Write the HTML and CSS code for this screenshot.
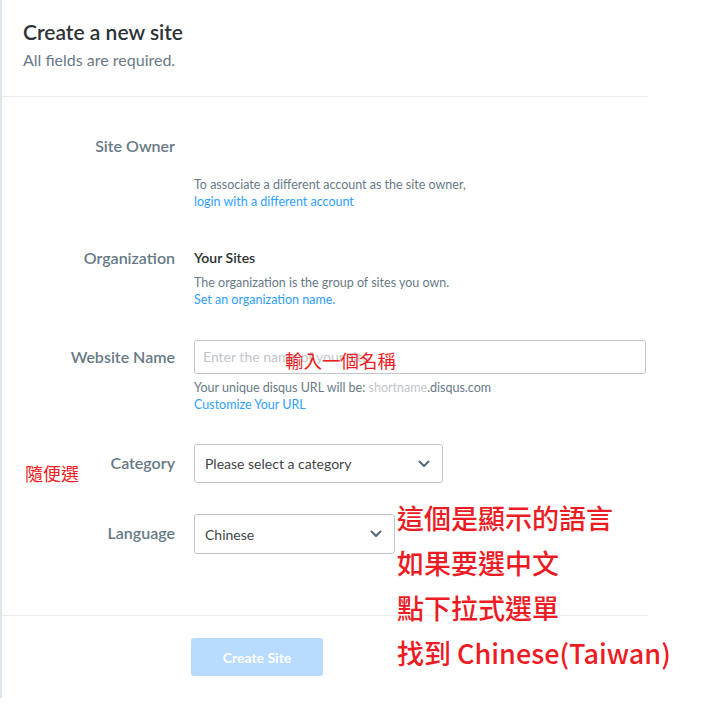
FILE: index.html
```html
<!DOCTYPE html>
<html>
<head>
<meta charset="utf-8">
<link rel="stylesheet" href="styles.css">
</head>
<body>
<div class="panel">
  <header class="head">
    <h1 class="title">Create a new site</h1>
    <p class="sub">All fields are required.</p>
  </header>
  <div class="form">
    <div class="row row-owner">
      <div class="label">Site Owner</div>
      <div class="field">
        <div class="owner-space"></div>
        <p class="help">To associate a different account as the site owner,<br><a class="link">login with a different account</a></p>
      </div>
    </div>
    <div class="row row-org">
      <div class="label">Organization</div>
      <div class="field">
        <div class="org-name">Your Sites</div>
        <p class="help help-org">The organization is the group of sites you own.<br><a class="link">Set an organization name.</a></p>
      </div>
    </div>
    <div class="row row-name">
      <div class="label label-input">Website Name</div>
      <div class="field">
        <div class="input">Enter the name of your site</div>
        <p class="help help-url">Your unique disqus URL will be: <span class="muted">shortname</span>.disqus.com<br><a class="link">Customize Your URL</a></p>
      </div>
    </div>
    <div class="row row-cat">
      <div class="label label-select">Category</div>
      <div class="field">
        <div class="select select-cat"><span>Please select a category</span>
          <svg class="chev" width="12" height="8" viewBox="0 0 12 8"><path d="M1.5 1.5 6 6l4.5-4.5" fill="none" stroke="#5d6b76" stroke-width="2" stroke-linecap="round" stroke-linejoin="round"/></svg>
        </div>
      </div>
    </div>
    <div class="row row-lang">
      <div class="label label-select2">Language</div>
      <div class="field">
        <div class="select select-lang"><span>Chinese</span>
          <svg class="chev" width="12" height="8" viewBox="0 0 12 8"><path d="M1.5 1.5 6 6l4.5-4.5" fill="none" stroke="#5d6b76" stroke-width="2" stroke-linecap="round" stroke-linejoin="round"/></svg>
        </div>
      </div>
    </div>
  </div>
  <div class="foot">
    <button class="btn">Create Site</button>
  </div>
</div>
<div class="note note-name">輸入一個名稱</div>
<div class="note note-cat">隨便選</div>
<div class="note note-lang">這個是顯示的語言<br>如果要選中文<br>點下拉式選單<br>找到 Chinese(Taiwan)</div>
</body>
</html>
```
FILE: styles.css
```css
* { box-sizing: border-box; }
html, body { margin: 0; padding: 0; background: #fff; }
body {
  font-family: "Lato", "Open Sans", sans-serif;
  position: relative;
  width: 726px;
  height: 714px;
  overflow: hidden;
}
.panel {
  width: 648px;
  height: 698px;
  border-left: 2px solid #e1e5ee;
}
.head {
  padding: 19px 0 0 21px;
  height: 97px;
  border-bottom: 1px solid #e9ebee;
}
.title {
  margin: 0;
  font-size: 21px;
  line-height: 26px;
  font-weight: 600;
  color: #2e3336;
}
.sub {
  margin: 5px 0 0;
  font-size: 16px;
  line-height: 20px;
  color: #687a86;
}
.form { padding-top: 39px; }
.row {
  display: grid;
  grid-template-columns: 173px 1fr;
  column-gap: 19px;
}
.label {
  text-align: right;
  font-size: 16px;
  line-height: 20px;
  font-weight: 600;
  color: #687a86;
}
.field { width: 452px; }
.owner-space { height: 40px; }
.help {
  margin: 0;
  font-size: 12.5px;
  line-height: 17px;
  color: #687a86;
}
.link { color: #2e9fff; }
.muted { color: #c2c6cc; }
.row-org { margin-top: 38px; }
.org-name {
  font-size: 14px;
  line-height: 20px;
  font-weight: 600;
  color: #2a2e2e;
}
.help-org { margin-top: 6px; }
.row-name { margin-top: 32px; }
.label-input { padding-top: 7px; }
.input {
  height: 34px;
  border: 1px solid #c2c6cc;
  border-radius: 3px;
  padding: 0 8px;
  font-size: 14px;
  line-height: 32px;
  color: #c2c6cc;
}
.help-url { margin-top: 5px; }
.row-cat { margin-top: 31px; }
.label-select { padding-top: 9px; }
.label-select2 { padding-top: 9px; }
.select {
  height: 39px;
  border: 1px solid #c2c6cc;
  border-radius: 3px;
  padding: 0 12px 0 10px;
  display: flex;
  align-items: center;
  justify-content: space-between;
  font-size: 14px;
  color: #3f4549;
}
.select-cat { width: 249px; }
.row-lang { margin-top: 31px; }
.select-lang { width: 201px; height: 40px; }
.chev { display: block; }
.foot {
  margin-top: 61px;
  border-top: 1px solid #e9ebee;
  padding: 22px 0 0 189px;
}
.btn {
  width: 132px;
  height: 38px;
  border: 0;
  border-radius: 3px;
  background: #b8dcff;
  color: #fff;
  font-family: "Lato", "Open Sans", sans-serif;
  font-size: 14px;
  font-weight: 700;
}
.note {
  position: absolute;
  font-family: "Noto Sans CJK TC", "Noto Sans", sans-serif;
  color: #ec1c24;
  white-space: nowrap;
}
.note-name { left: 285px; top: 347px; font-size: 18.5px; line-height: 26px; }
.note-cat { left: 25px; top: 460px; font-size: 18px; line-height: 26px; }
.note-lang { left: 397px; top: 495px; font-size: 27px; line-height: 45px; font-weight: 500; }
```
